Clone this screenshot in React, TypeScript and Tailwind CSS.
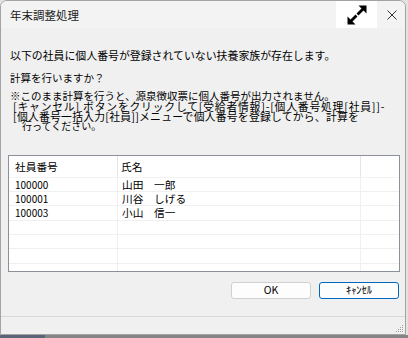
import React from "react";

const rows: [string, string][] = [
  ["100000", "山田　一郎"],
  ["100001", "川谷　しげる"],
  ["100003", "小山　信一"],
  ["", ""],
  ["", ""],
  ["", ""],
  ["", ""],
];

export default function App() {
  return (
    <div className="w-[408px] h-[338px] bg-[#e4e2de] overflow-hidden font-['Noto_Sans_CJK_JP','Noto_Sans',sans-serif] text-black">
      <div className="w-[406px] h-[335px] bg-[#f0f0f0] border border-[#a3a3a3] rounded-t-[7px] flex flex-col overflow-hidden">
        {/* Title bar */}
        <div className="h-[27px] bg-[#f3f3f3] flex items-center shrink-0">
          <div className="pl-[9px] text-[11.5px] leading-[14px] text-[#1a1a1a] flex-1">年末調整処理</div>
          <div className="w-[41px] h-[27px] bg-white flex items-center justify-center">
            <svg width="20" height="20" viewBox="0 0 20 20">
              <polygon points="19.5,0.5 19.5,8.5 11.5,0.5" fill="#000" />
              <line x1="10.5" y1="9.5" x2="16" y2="4" stroke="#000" strokeWidth="2.8" />
              <polygon points="0.5,19.5 0.5,11.5 8.5,19.5" fill="#000" />
              <line x1="9.5" y1="10.5" x2="4" y2="16" stroke="#000" strokeWidth="2.8" />
            </svg>
          </div>
          <div className="w-[28px] h-[27px] flex items-center justify-center pl-[2px]">
            <svg width="10" height="10" viewBox="0 0 10 10">
              <path d="M0.5 0.5 L9.5 9.5 M9.5 0.5 L0.5 9.5" stroke="#333" strokeWidth="1" />
            </svg>
          </div>
        </div>

        {/* Body */}
        <div className="flex-1 flex flex-col">
          <div className="pl-[9px] pt-[21px]">
            <div className="leading-[13px] h-[13px] text-[10.9px]">以下の社員に個人番号が登録されていない扶養家族が存在します。</div>
            <div className="leading-[13px] h-[13px] mt-[9px] text-[10.5px]">計算を行いますか？</div>
            <div className="mt-[6.5px] leading-[10.33px]">
              <div className="h-[10.33px] text-[10.5px]">※このまま計算を行うと、源泉徴収票に個人番号が出力されません。</div>
              <div className="h-[10.33px] pl-[3px] whitespace-pre text-[10.8px] tracking-[0.8px]">[キャンセル] ボタンをクリックして[受給者情報]-[個人番号処理[社員]]-</div>
              <div className="h-[10.33px] pl-[3px] whitespace-pre text-[10.8px] tracking-[0.25px]">[個人番号一括入力[社員]]メニューで個人番号を登録してから、計算を</div>
              <div className="h-[10.33px] pl-[12px] text-[10px]">行ってください。</div>
            </div>
          </div>

          {/* Table */}
          <div className="ml-[7px] mt-[23px] w-[392px] h-[117px] border border-[#8c9098] bg-white overflow-hidden text-[10.7px]">
            <div className="flex h-[22px] border-b border-[#f3f3f3]">
              <div className="w-[109px] pl-[6px] pt-[4px] leading-[14px] border-r border-[#e5e5e5]">社員番号</div>
              <div className="w-[243px] pl-[3px] pt-[4px] leading-[14px] border-r border-[#e5e5e5]">氏名</div>
              <div className="flex-1" />
            </div>
            {rows.map(([id, name], i) => (
              <div key={i} className="flex h-[14.33px] border-b border-[#f0f0f0] leading-[13px]">
                <div className="w-[109px] pl-[6px] text-[10px] border-r border-[#f0f0f0]">{id}</div>
                <div className="w-[243px] pl-[4px] border-r border-[#f0f0f0]">{name}</div>
                <div className="flex-1" />
              </div>
            ))}
          </div>

          {/* Buttons */}
          <div className="flex justify-end gap-[8px] pr-[6px] mt-[10px]">
            <div className="w-[80px] h-[17px] rounded-[3px] border border-[#d0d0d0] bg-[#fdfdfd] flex items-center justify-center text-[10.5px] leading-[12px]">OK</div>
            <div className="w-[80px] h-[17px] rounded-[3px] border border-[#0067c0] bg-[#fdfdfd] flex items-center justify-center text-[10.5px] leading-[12px]">ｷｬﾝｾﾙ</div>
          </div>
          <div className="flex-1" />
        </div>

        {/* Status bar */}
        <div className="h-[18px] border-t border-[#d8d8d8] flex justify-end items-end shrink-0">
          <svg width="8" height="8" viewBox="0 0 8 8" className="mr-[1px] mb-[1px]">
            <rect x="6" y="0" width="1" height="1" fill="#a0a0a0" />
            <rect x="4" y="2" width="1" height="1" fill="#a0a0a0" />
            <rect x="6" y="2" width="1" height="1" fill="#a0a0a0" />
            <rect x="2" y="4" width="1" height="1" fill="#a0a0a0" />
            <rect x="4" y="4" width="1" height="1" fill="#a0a0a0" />
            <rect x="6" y="4" width="1" height="1" fill="#a0a0a0" />
            <rect x="0" y="6" width="1" height="1" fill="#a0a0a0" />
            <rect x="2" y="6" width="1" height="1" fill="#a0a0a0" />
            <rect x="4" y="6" width="1" height="1" fill="#a0a0a0" />
            <rect x="6" y="6" width="1" height="1" fill="#a0a0a0" />
          </svg>
        </div>
      </div>
      <div className="h-[3px] flex">
        <div className="w-[45px] bg-[#5a6478]" />
        <div className="flex-1 bg-[#858585]" />
      </div>
    </div>
  );
}
